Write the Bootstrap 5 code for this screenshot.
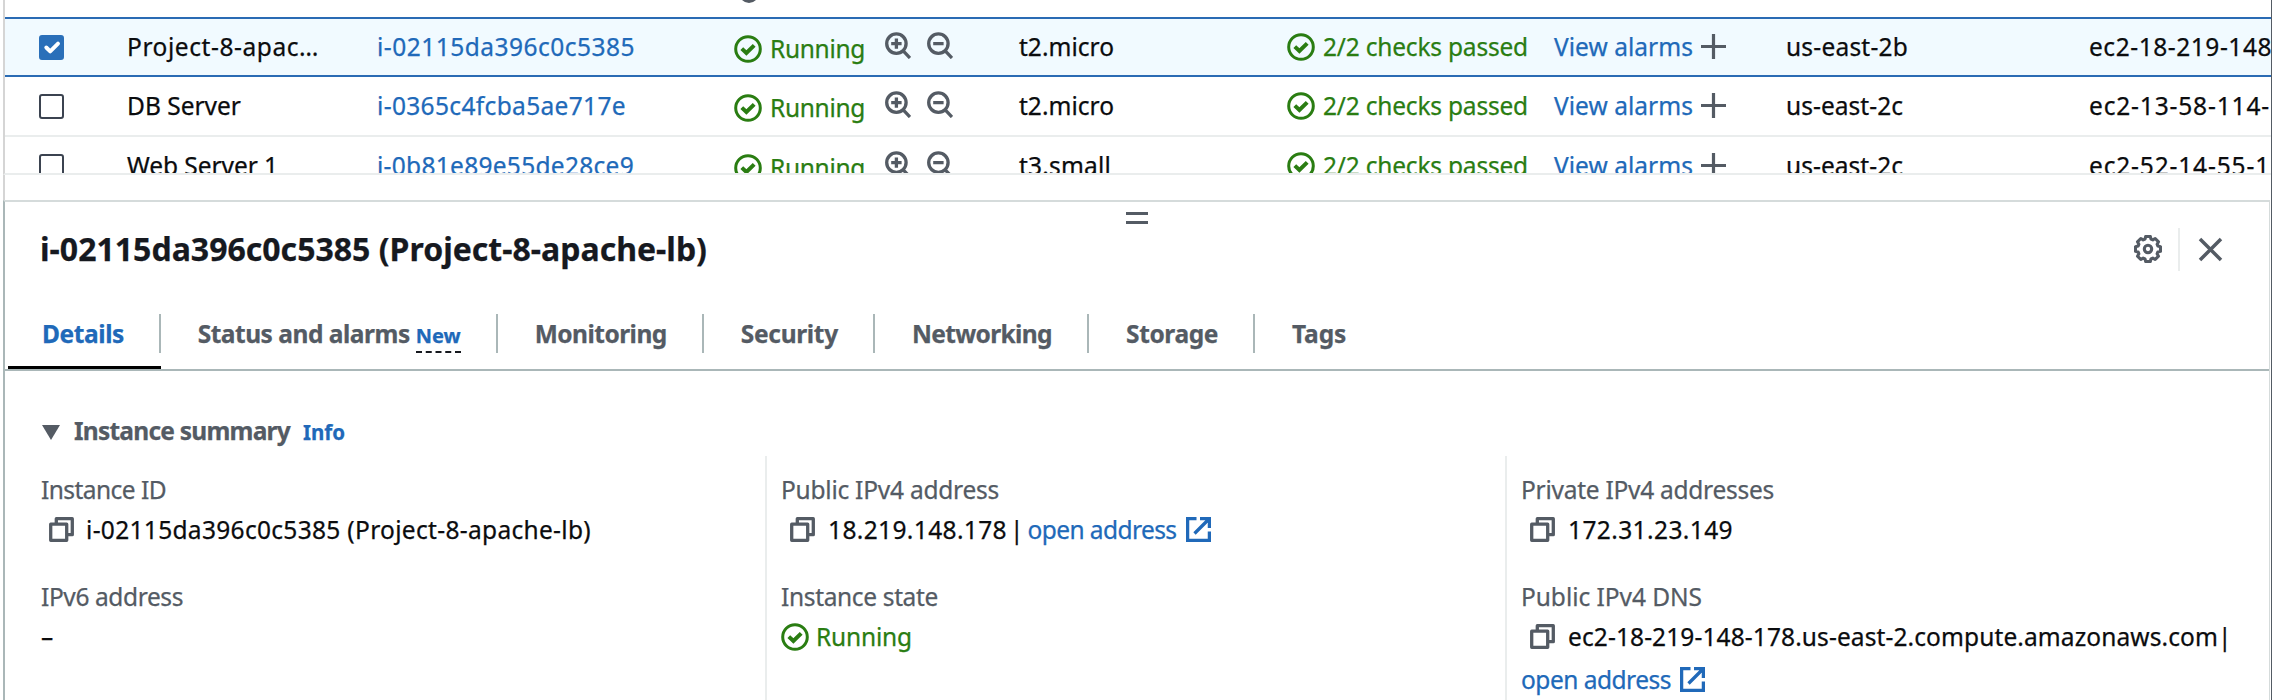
<!DOCTYPE html>
<html lang="en">
<head>
<meta charset="utf-8">
<title>Instances | EC2</title>
<link href="https://cdn.jsdelivr.net/npm/bootstrap@5.3.0/dist/css/bootstrap.min.css" rel="stylesheet">
<style>
:root{--grey:#545b64;--blue:#2069b9;--green:#2a7d12;}
body{font-family:"Noto Sans","Open Sans",sans-serif;font-size:24.5px;color:#0b0c0e;background:#fff;height:700px;overflow:hidden;line-height:36px;-webkit-text-stroke:.25px currentColor}
a{color:var(--blue);text-decoration:none}
svg{display:block;flex:none;overflow:visible}
.fit{display:inline-block;white-space:nowrap}
.page{height:700px;border-right:1px solid #545b64;padding-left:3px}
.list-pane{height:175px;border-left:2px solid #d5d5d5;border-bottom:2px solid #eaeded}
.header-tail{height:17px;padding-left:734px}
.inst{display:grid;grid-template-columns:122px 250px 357px 285px 268px 267px 232px 303px 1fr;height:60px;align-items:center;padding-bottom:1px;border-bottom:2px solid #eaeded}
.inst>div{display:flex;align-items:center;white-space:nowrap;min-width:0}
.inst.picked{background:#f1faff;border:2px solid #2a6bb4;border-right:0;margin-left:-2px;padding-bottom:1px}
.form-check-input.pick{width:25px;height:25px;margin:2px 0 0 34px;border:2px solid #3b4350;border-radius:3px;box-shadow:none;background-size:26px}
.form-check-input.pick:checked{background-color:#2a6fb9;border-color:#2a6fb9}
.ok{color:var(--green)}
.grey{color:var(--grey)}
.cut{overflow:hidden;width:240px}
.lens{margin:-2px 0 0 20px}
.lens+.lens{margin-left:16px}
.gap-strip{height:25px;border-left:2px solid #d5d5d5}
.detail{height:500px;border:2px solid #aab7b8;border-top-color:#d5dbdb;border-right:1px solid #d5dbdb;border-bottom:0;margin-right:1px}
.handle{height:25px;padding-top:10px}
.handle i{display:block;width:22px;height:3px;background:var(--grey);margin:0 auto 6px}
.head-row{height:44px}
.head-row h1{font-size:32px;font-weight:700;line-height:44px;margin:0;padding-left:35px;color:#16191f}
.vr-line{width:2px;height:43px;background:#eaeded;margin:0 19px 0 16px}
.closer{margin-right:47px}
.tabs{margin-top:43px;height:57px;border-bottom:2px solid #aab7b8;font-weight:700;color:var(--grey);flex-wrap:nowrap}
.tabs li{height:55px;display:flex}
.tabs li>div{height:39px;line-height:39px;border-right:2px solid #aab7b8;padding:0 35.4px 0 36.7px}
.tabs li:last-child>div{border:0}
.tabs li.on{color:var(--blue);border-bottom:3px solid #000;margin-left:3px}
.tabs li.on>div{padding:0 35px 0 34px}
.newtag{font-size:20px;color:var(--blue);border-bottom:2px dashed #16191f;height:37px;display:inline-block;margin-left:6px}
.summary{font-weight:700;color:var(--grey);padding:42px 0 0 37px;height:85px}
.tri{margin-top:12px}
.sumtxt{margin-left:14px}
.info{font-size:20.5px;margin-left:13px;line-height:38px}
.cols{display:grid;grid-template-columns:740px 740px 1fr;margin-left:20px;height:245px}
.cols>div{padding:16px 0 0 14px;border-left:2px solid #eaeded}
.cols>div:first-child{border-color:transparent}
.item{margin-bottom:28px}
.item .lbl{color:var(--grey);height:36px}
.item .val{height:43px;display:flex;align-items:center;white-space:nowrap}
.cp{margin:0 13px 0 9px}
.cols>div:first-child .cp{margin:0 12px 0 8px}
.bar{margin:0 4px 0 3px}
.ext{margin-left:9px;color:var(--blue)}
.state{margin-right:7px}
</style>
</head>
<body>
<svg width="0" height="0" class="position-absolute">
<defs>
<symbol id="check" viewBox="0 0 28 28"><g fill="none" stroke="currentColor" stroke-width="3"><circle cx="14" cy="14" r="12.3"/><path d="M7.8 13.6l4.6 4.4 7.8-7.6" stroke-width="4"/></g></symbol>
<symbol id="zin" viewBox="0 0 26 27"><g fill="none" stroke="currentColor" stroke-width="3.3"><circle cx="11.4" cy="11.6" r="9.7"/><path d="M18 18.6l7 7.4M11.4 6.4v10.4M6.2 11.6h10.4"/></g></symbol>
<symbol id="zout" viewBox="0 0 26 27"><g fill="none" stroke="currentColor" stroke-width="3.3"><circle cx="11.4" cy="11.6" r="9.7"/><path d="M18 18.6l7 7.4M6.2 11.6h10.4"/></g></symbol>
<symbol id="plus" viewBox="0 0 25 25"><path d="M12.5 0v25M0 12.5h25" fill="none" stroke="currentColor" stroke-width="3.2"/></symbol>
<symbol id="copy" viewBox="0 0 25 25"><path d="M1.7 7.2h16v16.1h-16zM7.3 7V1.7h16v16h-5.6" fill="none" stroke="currentColor" stroke-width="3.3" stroke-linejoin="round"/></symbol>
<symbol id="ext" viewBox="0 0 25 25"><path d="M10.5 1.6H1.6v21.8h21.8V14.5M14 1.6h9.4V11M23 2L8.5 16.5" fill="none" stroke="currentColor" stroke-width="3.3"/></symbol>
<symbol id="gear" viewBox="0 0 28 28"><g fill="none" stroke="currentColor" stroke-width="3.1" stroke-linejoin="round"><path d="M11.7 1.5h4.6l.7 2.6 1.8.8 2.4-1.4 3.3 3.3-1.4 2.4.8 1.8 2.6.7v4.6l-2.6.7-.8 1.8 1.4 2.4-3.3 3.3-2.4-1.4-1.8.8-.7 2.6h-4.6l-.7-2.6-1.8-.8-2.4 1.4-3.3-3.3 1.4-2.4-.8-1.8-2.6-.7v-4.6l2.6-.7.8-1.8-1.4-2.4 3.3-3.3 2.4 1.4 1.8-.8z"/><circle cx="14" cy="14" r="3.7"/></g></symbol>
</defs>
</svg>

<div class="page">
  <section class="list-pane overflow-hidden">
    <div class="header-tail"><svg width="20" height="3" viewBox="0 0 20 3" class="grey"><path d="M3 0h14q-3 3-7 3t-7-3" fill="currentColor"/></svg></div>
    <div id="rows"></div>
  </section>
  <div class="gap-strip"></div>

  <section class="detail">
    <div class="handle"><i></i><i></i></div>
    <div class="head-row d-flex align-items-center">
      <h1 class="flex-grow-1"><span class="fit" data-w="667">i-02115da396c0c5385 (Project-8-apache-lb)</span></h1>
      <svg class="grey" width="28" height="28"><use href="#gear"/></svg>
      <div class="vr-line"></div>
      <svg class="grey closer" width="23" height="23" viewBox="0 0 23 23"><path d="M1 1l21 21M22 1L1 22" stroke="currentColor" stroke-width="3.5"/></svg>
    </div>
    <ul class="tabs list-unstyled d-flex mb-0">
      <li class="on"><div><span class="fit" data-w="82">Details</span></div></li>
      <li><div><span class="fit" data-w="212">Status and alarms</span><span class="newtag"><span class="fit" data-w="45">New</span></span></div></li>
      <li><div><span class="fit" data-w="132">Monitoring</span></div></li>
      <li><div><span class="fit" data-w="97">Security</span></div></li>
      <li><div><span class="fit" data-w="140">Networking</span></div></li>
      <li><div><span class="fit" data-w="92">Storage</span></div></li>
      <li><div><span class="fit" data-w="54">Tags</span></div></li>
    </ul>
    <div class="summary d-flex align-items-start">
      <svg width="18" height="15" viewBox="0 0 18 15" class="tri"><path d="M0 0h18L9 15z" fill="currentColor"/></svg>
      <span class="fit sumtxt" data-w="216">Instance summary</span>
      <a href="#" class="fit info" data-w="42">Info</a>
    </div>
    <div class="cols">
      <div>
        <div class="item"><div class="lbl"><span class="fit" data-w="125">Instance ID</span></div>
          <div class="val"><svg class="grey cp" width="25" height="25"><use href="#copy"/></svg><span class="fit" data-w="505">i-02115da396c0c5385 (Project-8-apache-lb)</span></div></div>
        <div class="item"><div class="lbl"><span class="fit" data-w="142">IPv6 address</span></div>
          <div class="val">–</div></div>
      </div>
      <div>
        <div class="item"><div class="lbl"><span class="fit" data-w="218">Public IPv4 address</span></div>
          <div class="val"><svg class="grey cp" width="25" height="25"><use href="#copy"/></svg><span class="fit" data-w="179">18.219.148.178</span><span class="bar">|</span><a href="#"><span class="fit" data-w="149">open address</span></a><svg class="ext" width="25" height="25"><use href="#ext"/></svg></div></div>
        <div class="item"><div class="lbl"><span class="fit" data-w="157">Instance state</span></div>
          <div class="val ok"><svg class="state" width="28" height="28"><use href="#check"/></svg><span class="fit" data-w="96">Running</span></div></div>
      </div>
      <div>
        <div class="item"><div class="lbl"><span class="fit" data-w="253">Private IPv4 addresses</span></div>
          <div class="val"><svg class="grey cp" width="25" height="25"><use href="#copy"/></svg><span class="fit" data-w="165">172.31.23.149</span></div></div>
        <div class="item"><div class="lbl"><span class="fit" data-w="181">Public IPv4 DNS</span></div>
          <div class="val"><svg class="grey cp" width="25" height="25"><use href="#copy"/></svg><span class="fit" data-w="650">ec2-18-219-148-178.us-east-2.compute.amazonaws.com</span><span>|</span></div>
          <div class="val"><a href="#"><span class="fit" data-w="150">open address</span></a><svg class="ext" width="25" height="25"><use href="#ext"/></svg></div></div>
      </div>
    </div>
  </section>
</div>

<script src="https://cdn.jsdelivr.net/npm/bootstrap@5.3.0/dist/js/bootstrap.bundle.min.js"></script>
<script>
const data=[
 ["Project-8-apac…",192,"i-02115da396c0c5385",258,"t2.micro",95,"us-east-2b",122,"ec2-18-219-148",183,true],
 ["DB Server",114,"i-0365c4fcba5ae717e",249,"t2.micro",95,"us-east-2c",117,"ec2-13-58-114-",181],
 ["Web Server 1",151,"i-0b81e89e55de28ce9",257,"t3.small",92,"us-east-2c",117,"ec2-52-14-55-1",181]];
const ic=(n,w,h,c)=>`<svg class="${c}" width="${w}" height="${h}"><use href="#${n}"/></svg>`;
const f=(t,w)=>`<span class="fit" data-w="${w}">${t}</span>`;
document.getElementById("rows").innerHTML=data.map(d=>`
<div class="inst ${d[10]?"picked":""}">
 <div><input class="form-check-input pick" type="checkbox" ${d[10]?"checked":""} aria-label="Select"></div>
 <div>${f(d[0],d[1])}</div>
 <div><a href="#">${f(d[2],d[3])}</a></div>
 <div class="ok">${ic("check",28,28,"mt-1 me-2")}<span class="mt-1">${f("Running",95)}</span>${ic("zin",26,27,"grey lens")}${ic("zout",26,27,"grey lens")}</div>
 <div>${f(d[4],d[5])}</div>
 <div class="cut ok">${ic("check",28,28,"me-2")}${f("2/2 checks passed",205)}</div>
 <div><a href="#">${f("View alarms",139)}</a>${ic("plus",25,25,"grey ms-2")}</div>
 <div>${f(d[6],d[7])}</div>
 <div>${f(d[8],d[9])}</div>
</div>`).join("");
document.querySelectorAll(".fit").forEach(e=>{
  const n=e.textContent.length,w=e.getBoundingClientRect().width;
  e.style.letterSpacing=((+e.dataset.w-w)/n).toFixed(3)+"px";
});
</script>
</body>
</html>
